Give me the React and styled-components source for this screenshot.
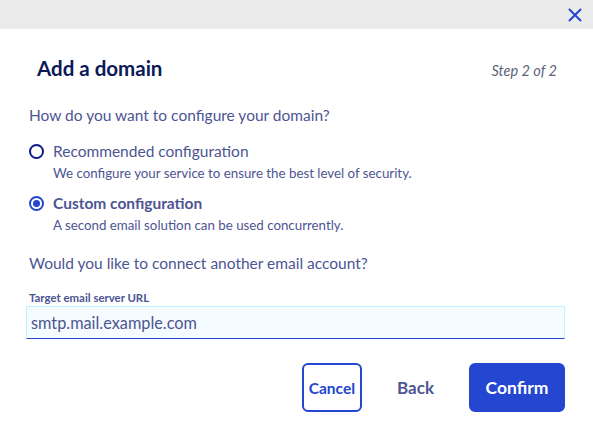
import React, { useState } from "react";
import styled, { createGlobalStyle } from "styled-components";

const Global = createGlobalStyle`
  html, body { margin: 0; padding: 0; background: #fff; }
  body { font-family: "Lato", "Noto Sans", sans-serif; }
  * { box-sizing: border-box; }
`;

const Modal = styled.div`
  width: 593px;
  height: 432px;
  background: #fff;
  display: flex;
  flex-direction: column;
`;

const TopBar = styled.div`
  height: 29px;
  background: #ebebeb;
  display: flex;
  justify-content: flex-end;
  align-items: center;
  padding-right: 9px;
`;

const CloseButton = styled.button`
  border: 0;
  background: transparent;
  padding: 0;
  width: 18px;
  height: 18px;
  display: flex;
  align-items: center;
  justify-content: center;
  cursor: pointer;
`;

const Body = styled.div`
  padding: 0 28px 0 29px;
  display: flex;
  flex-direction: column;
`;

const HeaderRow = styled.div`
  display: flex;
  justify-content: space-between;
  align-items: baseline;
  padding: 27px 8px 0 8px;
  height: 76px;
`;

const Title = styled.h2`
  margin: 0;
  font-size: 20.5px;
  font-weight: 700;
  color: #0b1958;
`;

const Step = styled.span`
  font-size: 14.5px;
  font-style: italic;
  color: #5c6378;
`;

const Question = styled.p`
  margin: 0;
  font-size: 15.5px;
  color: #4d5592;
  line-height: 20px;
  padding-top: ${(p) => p.$top || 0}px;
`;

const Options = styled.div`
  display: flex;
  flex-direction: column;
  gap: 11px;
  margin-top: 16px;
`;

const Option = styled.label`
  display: grid;
  grid-template-columns: 24px 1fr;
  row-gap: 3px;
  cursor: pointer;
`;

const Radio = styled.span`
  width: 15px;
  height: 15px;
  border-radius: 50%;
  border: 2px solid ${(p) => (p.$checked ? "#2446d0" : "#0c1a8c")};
  align-self: center;
  display: flex;
  align-items: center;
  justify-content: center;
  &::after {
    content: "";
    display: ${(p) => (p.$checked ? "block" : "none")};
    width: 7px;
    height: 7px;
    border-radius: 50%;
    background: #2446d0;
  }
`;

const OptionLabel = styled.span`
  font-size: 15.5px;
  line-height: 20px;
  color: #4d5592;
  font-weight: ${(p) => (p.$bold ? 700 : 400)};
`;

const OptionDesc = styled.span`
  grid-column: 2;
  font-size: 13.3px;
  line-height: 18px;
  color: #4d5592;
`;

const FieldLabel = styled.label`
  display: block;
  margin-top: 18px;
  font-size: 11.4px;
  font-weight: 700;
  color: #4d5592;
  line-height: 14px;
`;

const Input = styled.input`
  margin: 1px 0 0 -3px;
  width: calc(100% + 3px);
  height: 33px;
  background: #f5fcff;
  border: 1px solid #bff1ff;
  border-bottom: 1px solid #2446d0;
  padding: 0 4px;
  font-family: inherit;
  font-size: 16.3px;
  color: #4d5592;
  outline: none;
  caret-color: #0b1958;
`;

const Footer = styled.div`
  display: flex;
  justify-content: flex-end;
  align-items: center;
  margin-top: 24px;
`;

const Button = styled.button`
  height: 49px;
  border-radius: 6px;
  font-family: inherit;
  font-weight: 700;
  cursor: pointer;
  padding: 0 ${(p) => (p.$variant === "ghost" ? 33 : 5)}px;
  min-width: ${(p) => (p.$variant === "primary" ? 96 : 0)}px;
  border: 2px solid
    ${(p) => (p.$variant === "ghost" ? "transparent" : "#2446d0")};
  background: ${(p) => (p.$variant === "primary" ? "#2446d0" : "transparent")};
  color: ${(p) =>
    p.$variant === "primary" ? "#fff" : p.$variant === "secondary" ? "#2446d0" : "#4d5592"};
  font-size: ${(p) => (p.$variant === "ghost" ? 17 : p.$variant === "primary" ? 17.5 : 15.5)}px;
`;

export default function App() {
  const [choice, setChoice] = useState("custom");
  return (
    <>
      <Global />
      <Modal>
        <TopBar>
          <CloseButton aria-label="Close">
            <svg width="14" height="14" viewBox="0 0 14 14">
              <path d="M1.5 1.5 L12.5 12.5 M12.5 1.5 L1.5 12.5" stroke="#2446d0" strokeWidth="2" strokeLinecap="round" />
            </svg>
          </CloseButton>
        </TopBar>
        <Body>
          <HeaderRow>
            <Title>Add a domain</Title>
            <Step>Step 2 of 2</Step>
          </HeaderRow>
          <Question>How do you want to configure your domain?</Question>
          <Options>
            <Option onClick={() => setChoice("recommended")}>
              <Radio $checked={choice === "recommended"} />
              <OptionLabel $bold={choice === "recommended"}>Recommended configuration</OptionLabel>
              <OptionDesc>We configure your service to ensure the best level of security.</OptionDesc>
            </Option>
            <Option onClick={() => setChoice("custom")}>
              <Radio $checked={choice === "custom"} />
              <OptionLabel $bold={choice === "custom"}>Custom configuration</OptionLabel>
              <OptionDesc>A second email solution can be used concurrently.</OptionDesc>
            </Option>
          </Options>
          <Question $top={19}>Would you like to connect another email account?</Question>
          <FieldLabel htmlFor="url">Target email server URL</FieldLabel>
          <Input id="url" defaultValue="smtp.mail.example.com" />
          <Footer>
            <Button $variant="secondary">Cancel</Button>
            <Button $variant="ghost">Back</Button>
            <Button $variant="primary">Confirm</Button>
          </Footer>
        </Body>
      </Modal>
    </>
  );
}
